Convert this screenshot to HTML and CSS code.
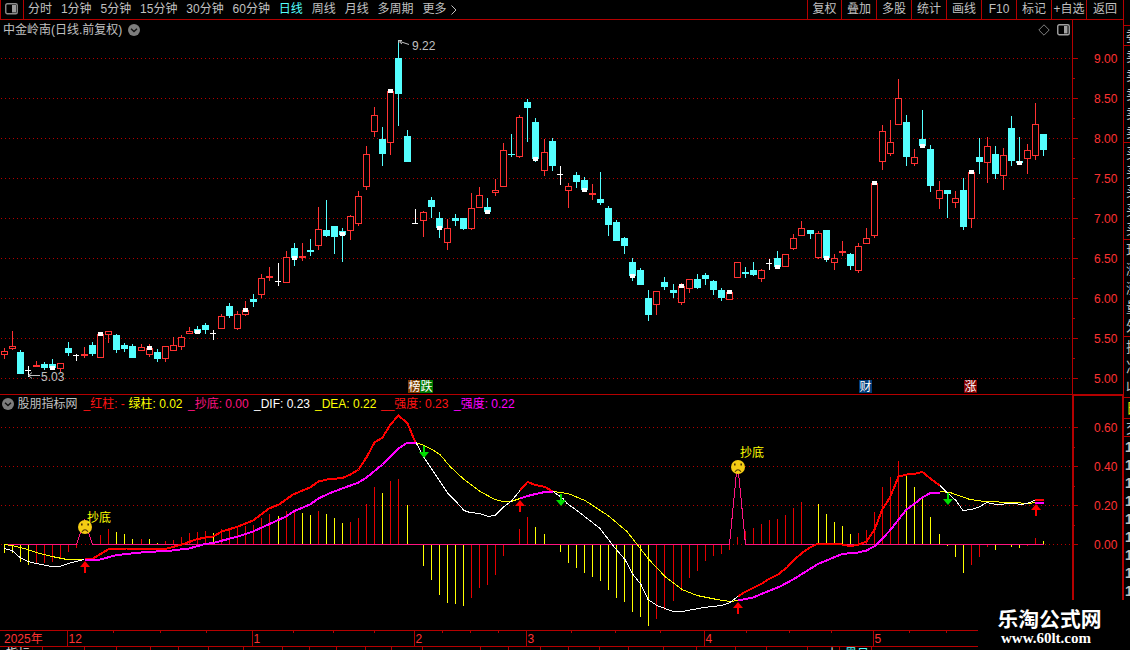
FILE: index.html
```html
<!DOCTYPE html>
<html lang="zh-CN">
<head>
    <meta charset="UTF-8">
    <meta name="viewport" content="width=device-width, initial-scale=1.0">
    <title>中金岭南 日线</title>
    <link rel="stylesheet" href="styles.css">
</head>
<body>
    <div class="terminal">
        <div class="workspace">
            <header class="toolbar">
                <div class="layout-toggle">
                    <svg width="13" height="12" viewBox="0 0 13 12">
                        <rect x="0.75" y="0.75" width="11.5" height="10" rx="1.5" fill="none" stroke="#8c8c8c" stroke-width="1.4"/>
                        <rect x="7" y="2" width="4" height="7.5" fill="#9a9a9a"/>
                    </svg>
                </div>
                <nav class="periods">
                    <span>分时</span>
                    <span>1分钟</span>
                    <span>5分钟</span>
                    <span>15分钟</span>
                    <span>30分钟</span>
                    <span>60分钟</span>
                    <span class="active">日线</span>
                    <span>周线</span>
                    <span>月线</span>
                    <span>多周期</span>
                    <span class="more">更多
                        <svg width="6" height="10" viewBox="0 0 6 10"><path d="M0.5 0.5L5 5L0.5 9.5" fill="none" stroke="#c0c0c0"/></svg>
                    </span>
                </nav>
                <div class="actions">
                    <span>复权</span>
                    <span>叠加</span>
                    <span>多股</span>
                    <span>统计</span>
                    <span>画线</span>
                    <span>F10</span>
                    <span>标记</span>
                    <span>+自选</span>
                    <span>返回</span>
                </div>
            </header>

            <section class="panel price-panel">
                <svg id="priceChart" width="1124" height="374" viewBox="0 20 1124 374"></svg>
                <div class="panel-head">
                    <span>中金岭南(日线.前复权)</span>
                    <svg class="chevron" width="12" height="12" viewBox="0 0 12 12">
                        <circle cx="6" cy="6" r="6" fill="#7d7d7d"/>
                        <path d="M3 4.8L6 7.6L9 4.8" fill="none" stroke="#111" stroke-width="1.4"/>
                    </svg>
                    <div class="panel-tools">
                        <svg width="12" height="12" viewBox="0 0 12 12"><path d="M6 0.8L11.2 6L6 11.2L0.8 6Z" fill="none" stroke="#808080"/></svg>
                        <svg width="13" height="12" viewBox="0 0 13 12">
                            <rect x="0.75" y="0.75" width="11.5" height="10" rx="1.5" fill="none" stroke="#a0a0a0" stroke-width="1.4"/>
                            <rect x="7" y="2" width="3.5" height="7.5" fill="#a0a0a0"/>
                        </svg>
                    </div>
                </div>
            </section>

            <section class="panel macd-panel">
                <svg id="macdChart" width="1124" height="236" viewBox="0 394 1124 236"></svg>
                <div class="legend">
                    <svg class="chevron" width="12" height="12" viewBox="0 0 12 12">
                        <circle cx="6" cy="6" r="6" fill="#7d7d7d"/>
                        <path d="M3 4.8L6 7.6L9 4.8" fill="none" stroke="#111" stroke-width="1.4"/>
                    </svg>
                    <span>股朋指标网</span>
                    <span class="red">_红柱: -</span>
                    <span class="yellow">绿柱: 0.02</span>
                    <span class="pink">_抄底: 0.00</span>
                    <span class="white">_DIF: 0.23</span>
                    <span class="yellow">_DEA: 0.22</span>
                    <span class="red">__强度: 0.23</span>
                    <span class="magenta">_强度: 0.22</span>
                </div>
            </section>

            <footer class="time-axis">
                <svg id="timeAxis" width="978" height="20" viewBox="0 630 978 20"></svg>
            </footer>
        </div>

        <aside class="quotes">
            <div class="group head"><span>委</span></div>
            <div class="group five"><span>卖</span><span>卖</span><span>卖</span><span>卖</span><span>卖</span></div>
            <div class="group five"><span>买</span><span>买</span><span>买</span><span>买</span><span>买</span></div>
            <div class="group five"><span>现</span><span>涨</span><span>涨</span><span>量</span><span>外</span></div>
            <div class="group three"><span>换</span><span>净</span><span>收</span></div>
            <div class="group tab"><span>日</span></div>
            <div class="group trade"><span>交</span></div>
            <div class="ticks">
                <span>1</span><span>1</span><span>1</span><span>1</span><span>1</span><span>1</span><span>1</span><span>1</span><span>1</span>
            </div>
        </aside>

        <div class="watermark">
            <div class="site-name">乐淘公式网</div>
            <div class="site-url">www.60lt.com</div>
        </div>
    </div>

    <script src="script.js"></script>
</body>
</html>
```

FILE: styles.css
```css
body, html {
    margin: 0;
    padding: 0;
    height: 100%;
    overflow: hidden;
    background-color: #000;
    color: #c0c0c0;
    font-family: 'Liberation Sans', 'Noto Sans CJK SC', sans-serif;
    font-size: 12px;
    line-height: 14px;
}

svg {
    display: block;
}

.terminal {
    position: relative;
    display: flex;
    width: 1130px;
    height: 650px;
    overflow: hidden;
}

.workspace {
    width: 1124px;
    flex: none;
    display: flex;
    flex-direction: column;
}

/* Top toolbar */
.toolbar {
    display: flex;
    height: 20px;
    box-sizing: border-box;
    border-bottom: 1px solid #b40000;
    border-right: 1px solid #b40000;
    line-height: 19px;
    white-space: nowrap;
}

.layout-toggle {
    width: 24px;
    box-sizing: border-box;
    padding: 3px 0 0 4px;
    border-left: 1px solid #b40000;
    border-right: 1px solid #b40000;
}

.periods {
    display: flex;
    flex: 1;
    gap: 8.9px;
    padding-left: 4px;
}

.periods .active {
    color: #54ffff;
}

.more {
    display: flex;
    align-items: center;
    gap: 5px;
}

.actions {
    display: flex;
}

.actions span {
    width: 35px;
    box-sizing: border-box;
    border-left: 1px solid #b40000;
    text-align: center;
}

.actions span:first-child {
    width: 34px;
}

.actions span:last-child {
    width: 37px;
}

/* Chart panels */
.panel {
    display: grid;
}

.panel > * {
    grid-area: 1 / 1;
}

.price-panel {
    height: 374px;
}

.macd-panel {
    height: 236px;
}

.panel-head {
    display: flex;
    align-items: center;
    align-self: start;
    gap: 5.5px;
    height: 19px;
    padding: 0 54px 0 3px;
}

.panel-tools {
    display: flex;
    gap: 7px;
    margin-left: auto;
}

.legend {
    display: grid;
    grid-template-columns: 15.5px 66px 45px 59.5px 66px 61px 66px 73px auto;
    align-items: center;
    align-self: start;
    height: 19px;
    padding-left: 2px;
    white-space: nowrap;
}

.red {
    color: #ff1414;
}

.yellow {
    color: #ffff00;
}

.pink {
    color: #ff1480;
}

.white {
    color: #ffffff;
}

.magenta {
    color: #ff00ff;
}

/* SVG text */
.label {
    fill: #c0c0c0;
}

.scale {
    fill: #ff3232;
}

.signal {
    fill: #ffff00;
}

.badge {
    fill: #ffffff;
}

.clip-text {
    fill: #e0e0e0;
}

.clip-text.hot {
    fill: #54ffff;
}

/* Quote column, cut off by the window edge */
.quotes {
    width: 6px;
    flex: none;
    overflow: hidden;
    padding-top: 25px;
    box-sizing: border-box;
}

.group {
    display: flex;
    flex-direction: column;
    justify-content: space-around;
    box-sizing: border-box;
    padding-left: 2px;
    border-top: 1px solid #b40000;
    font-size: 14px;
    line-height: 16px;
}

.head {
    height: 20px;
}

.five {
    height: 97px;
}

.three {
    height: 61px;
}

.tab {
    height: 21px;
    color: #e0e000;
}

.trade {
    height: 19px;
    border-bottom: 1px solid #b40000;
}

.ticks {
    display: flex;
    flex-direction: column;
    padding: 1px 0 0 1px;
    font-size: 14px;
    font-weight: bold;
    line-height: 18px;
}

.watermark {
    position: absolute;
    left: 978px;
    top: 600px;
    width: 152px;
    height: 50px;
    background-color: #000;
    color: #fff;
    font-weight: bold;
    white-space: nowrap;
}

.site-name {
    padding: 7px 0 0 19.5px;
    font-family: 'Noto Sans CJK SC', sans-serif;
    font-size: 20.8px;
    line-height: 22px;
}

.site-url {
    padding: 1px 0 0 23px;
    font-family: 'Liberation Serif', serif;
    font-size: 15px;
    line-height: 17px;
}
```

FILE: script.js
```js
const LINE = '#b40000';
const RED = '#ff3232';
const CYAN = '#54ffff';

// x of the wick for the bar with this index
const barX = i => 4 + Math.floor(i * 8.0606);

// type, high, body top, body bottom, low, marker top
const candles = [
    ['r',348,351,355,359], ['r',331,346,349,350], ['c',350,352,374,374], ['w',366,370,371,377], ['r',361,365,367,367],
    ['c',362,364,368,370], ['c',359,364,368,369,366], ['r',363,363,369,372], ['c',342,348,353,356], ['w',354,355,356,361],
    ['r',347,354,356,358], ['c',342,345,354,356], ['r',334,334,358,358,332], ['r',331,331,335,343], ['c',334,335,350,353],
    ['c',343,345,349,352], ['c',344,346,358,358], ['r',344,347,351,351], ['r',344,348,355,357,346], ['c',349,352,359,362],
    ['r',346,346,359,362], ['r',337,345,351,351], ['r',335,337,347,350], ['r',327,331,334,334], ['c',326,329,333,334,330],
    ['c',323,325,330,334], ['w',330,333,334,340], ['r',314,316,329,329], ['c',303,306,316,318], ['r',311,314,329,330],
    ['r',301,310,315,316,308], ['c',294,299,302,307], ['r',274,278,295,298], ['r',267,276,278,281], ['w',263,281,282,286],
    ['r',251,257,283,283], ['c',243,248,258,266,256], ['r',243,256,258,261], ['c',239,250,252,256], ['r',207,229,246,250],
    ['c',200,230,236,237], ['c',226,226,237,254], ['c',228,231,235,262,232], ['r',215,216,231,240], ['r',191,196,224,226],
    ['r',146,154,187,190], ['r',107,115,132,137], ['c',127,139,154,166], ['r',91,91,143,155,89], ['c',40,58,94,126],
    ['c',130,136,162,162], ['w',209,223,224,223], ['r',211,212,221,237], ['c',197,200,207,218], ['c',212,218,228,238,226],
    ['r',219,228,243,250], ['c',214,218,221,226], ['c',218,218,229,230], ['r',193,208,229,230], ['r',187,195,208,208],
    ['c',198,207,212,214,210], ['r',179,190,193,196], ['r',143,150,187,187], ['c',134,154,155,157], ['r',115,117,157,158],
    ['c',99,102,108,142], ['c',118,122,159,162,157], ['r',139,152,171,176], ['c',138,141,166,171], ['w',166,174,175,185],
    ['r',183,186,191,208], ['c',172,175,182,188], ['c',177,180,190,191,188], ['r',184,193,195,200], ['c',172,199,203,205],
    ['c',206,208,225,236], ['c',220,222,241,241], ['c',237,238,246,254], ['c',258,262,276,281,274], ['c',268,270,285,285],
    ['c',290,298,315,321], ['r',291,291,305,315], ['c',277,282,287,290], ['c',284,290,293,298], ['r',283,286,303,305,284],
    ['r',279,279,289,293], ['c',274,279,288,289], ['c',273,275,279,285], ['c',280,281,290,295], ['c',288,290,298,301],
    ['r',292,292,300,300,290], ['r',262,262,278,278], ['c',267,272,274,278], ['c',262,270,275,276], ['r',269,270,279,282],
    ['w',259,263,264,270], ['c',251,258,267,269,265], ['r',254,254,267,267], ['r',234,238,249,250], ['r',221,228,236,236],
    ['c',230,230,234,239], ['r',231,233,258,259], ['c',230,230,258,262,256], ['r',254,258,263,270], ['r',241,251,253,256],
    ['c',253,254,266,270], ['r',243,246,271,273], ['r',228,238,244,244], ['r',183,183,236,238,181], ['r',125,131,162,170],
    ['r',120,142,154,156], ['r',79,98,125,125], ['c',115,122,157,166], ['r',149,157,164,166], ['c',110,139,146,148,144],
    ['c',145,149,186,192], ['r',181,190,199,209], ['c',190,190,194,218], ['r',191,198,203,208], ['c',178,190,227,230],
    ['r',172,172,219,228,170], ['c',138,157,162,174], ['r',137,146,163,183], ['c',146,154,174,179], ['r',148,155,176,190],
    ['c',116,128,161,166], ['c',137,161,163,165,161], ['r',144,150,159,174], ['r',103,124,156,160], ['c',134,134,150,156]
];

// end of each histogram bar, y = yellow, r = red, 0 = nothing
const bars = ('y553 y553 y562 y565 r564 r563 r562 r558 r552 r548 0 0 r535 r529 y532 y534 y539 r539 y539 y543 ' +
    'r541 r540 r537 r533 r532 r531 y533 r529 r529 r527 r526 r525 r518 r514 y516 r511 r511 y513 y515 r511 ' +
    'y514 y518 y523 r522 r518 r504 r487 y493 r481 r479 y505 0 y566 y580 y595 y603 y604 y606 r598 r588 ' +
    'r585 r575 r556 0 r529 r517 y527 y534 0 y552 y563 y568 y573 y577 y581 y590 y598 y602 y612 y617 ' +
    'y626 r619 r610 r601 r591 r578 r571 r561 r556 r554 r550 r537 r531 r528 r524 r520 r519 r515 r508 r502 ' +
    '0 y504 y514 y522 y526 y534 r533 r530 r512 r487 r477 r461 y476 y487 y498 y517 y534 y546 y557 y573 ' +
    'r565 r557 r547 y550 0 y547 y548 r546 r538 y541').split(' ');

const yellow = [
    '4,544 12,545 28,549 36,552 52,556 67,559 84,559',
    '416,442 424,445 432,449 440,454 450,466 463,478 480,491 495,499 503,501 511,501 520,498',
    '553,491 568,493 585,500 608,515 627,531 638,545 648,558 665,576 682,589 697,595 717,599 730,601 738,600',
    '940,491 950,492 970,499 985,501 1013,502 1028,503 1036,502'
];
const white = [
    '4,548 12,550 20,557 28,561 36,563 52,566 60,566 68,563 84,559',
    '416,442 424,457 432,469 448,493 456,501 464,510 470,512 480,513 488,516 495,515 504,506 511,501 520,490',
    '553,491 563,498 567,503 577,510 600,528 613,545 625,559 633,574 641,584 648,599 657,605 673,611 682,611 704,607 722,605 730,602 738,596',
    '940,485 948,493 956,500 963,510 972,509 980,506 987,502 996,504 1013,503 1022,504 1030,502 1036,499'
];
const red = [
    '85,559 93,558 109,548.5 127,548 134,549 149,548 155,548.5 167,548 182,544 196,539 205,537 213,536 222,531 238,526 253,520 269,508 279,504 293,494 310,487 318.5,481 327,479 342.5,477.5 350.5,474 358.5,469 367,456 374.5,442 382.5,437 390.5,424 398.5,415 407.5,423 415.5,442',
    '520,490 527.5,481.5 535.5,484.5 545,486.5 553,491',
    '738,596 744,592 762,583 769,578.5 778,574 787,567 795,558.5 802,552.5 810,547 818,543 842,544 850,545.5 858,544.5 866.5,541 874.5,529 882.5,508.5 890,497 898.5,476 907,474 914,473.5 922.5,471.5 931.5,479 940,485',
    '1035,499 1044,499'
];
const magenta = [
    '85,559 100,559 117,554.5 141,552 172,550 189,548 205,543.5 213,542.5 238,536 253,531 268.5,524 286,516 294.5,510.5 310,504 318.5,498 330,492.5 358.5,482 366.5,477 382.5,464 398.5,448 407.5,442 415.5,442',
    '520,498 527.5,495.5 535.5,493.5 545,491.5 553,491',
    '738,600 753,597 770,590 780,586 793,579 802,573.5 818,563.5 842,553.5 858,552 866.5,550 875,545.5 890,530 906,509.5 922.5,497 931,492 940,492',
    '1035,502 1044,502'
];

function rect(x, y, w, h, color) {
    return `<rect x="${x}" y="${y}" width="${w}" height="${h}" fill="${color}" shape-rendering="crispEdges"/>`;
}

function text(x, y, value, cls) {
    return `<text x="${x}" y="${y}" class="${cls}">${value}</text>`;
}

function grid(y) {
    return `<path d="M1 ${y + 0.5}H1072" stroke="${LINE}" stroke-dasharray="1 3" shape-rendering="crispEdges"/>`;
}

function curve(points, color, width) {
    return `<polyline points="${points}" transform="translate(0 .5)" fill="none" stroke="${color}" stroke-width="${width}" stroke-linejoin="round" shape-rendering="crispEdges"/>`;
}

function candle(c, i) {
    const [type, high, top, bottom, low, mark] = c;
    const x = barX(i);
    const color = { r: RED, c: CYAN, w: '#fff' }[type];
    let out = rect(x, high, 1, low - high, color);
    if (type === 'w') {
        out += rect(x - 3, top, 6, 1, color);
    } else {
        out += rect(x - 3, top, 7, bottom - top, color);
        if (type === 'r' && bottom - top > 2) {
            out += rect(x - 2, top + 1, 5, bottom - top - 2, '#000');
        }
    }
    if (mark) {
        out += rect(x - 2, mark, 5, 4, '#fff');
    }
    return out;
}

function drawPrice() {
    let out = '';
    for (let i = 0; i < 9; i++) {
        const y = 58 + i * 40;
        out += grid(y);
        out += rect(1073, y, 5, 1, LINE);
        if (i < 8) {
            out += rect(1073, y + 20, 2, 1, LINE);
        }
        out += text(1094, y + 5, (9 - i * 0.5).toFixed(2), 'scale');
    }
    out += rect(1072, 20, 1, 374, LINE) + rect(1123, 20, 1, 374, LINE);
    out += candles.map(candle).join('');

    // highest and lowest price
    out += '<path d="M398.5 43V40.5H402M399 41.5L402 44M400 41.5L409 44.5" fill="none" stroke="#c0c0c0"/>';
    out += text(412, 50, '9.22', 'label');
    out += '<path d="M28 375.5H40M32 372.5L28.5 375.5L32 378.5" fill="none" stroke="#c0c0c0"/>';
    out += text(41, 381, '5.03', 'label');

    // event badges
    [[408, '榜', '#7d3c00'], [420, '跌', '#007800'], [859, '财', '#003c78'], [964, '涨', '#820000']].forEach(b => {
        out += rect(b[0], 380, 13, 13, b[2]) + text(b[0] + 0.5, 391, b[1], 'badge');
    });
    document.getElementById('priceChart').innerHTML = out;
}

function arrow(x, y, up) {
    const d = up ? 'l5 6h-4v6h-2v-6h-4z' : 'l5 -6h-4v-6h-2v6h-4z';
    return `<path d="M${x} ${up ? y : y + 12}${d}" fill="${up ? '#ff0000' : '#00dc00'}"/>`;
}

function sadFace(x, y) {
    return `<g transform="translate(${x} ${y})"><circle r="7" fill="#f5cd14"/>` +
        '<path d="M-3.2 -3.4v1.8M3.2 -3.4v1.8" stroke="#4a3200" stroke-width="1.6"/>' +
        '<path d="M-3 4.8Q0 0.6 3 4.8" fill="none" stroke="#4a3200" stroke-width="1.1"/></g>';
}

function drawMacd() {
    let out = '';
    [427, 466, 505, 544].forEach((y, i) => {
        out += grid(y) + rect(1074, y, 4, 1, LINE);
        if (i < 3) {
            out += rect(1074, y + 20, 1, 1, LINE);
        }
        out += text(1094, y + 5, (0.6 - i * 0.2).toFixed(2).replace('-', ''), 'scale');
    });
    bars.forEach((bar, i) => {
        if (bar === '0') {
            return;
        }
        const end = Number(bar.slice(1));
        out += rect(barX(i), Math.min(end, 544), 1, Math.abs(end - 544), bar[0] === 'y' ? '#ffff00' : '#e60000');
    });
    out += '<path d="M4 544.5H76.5L84.5 521L92.5 544.5H729.5L737.5 462L745.5 544.5H1044" fill="none" stroke="#ff1480" shape-rendering="crispEdges"/>';
    yellow.forEach(p => out += curve(p, '#ffff00', 1));
    white.forEach(p => out += curve(p, '#ffffff', 1));
    red.forEach(p => out += curve(p, '#ff0000', 2));
    magenta.forEach(p => out += curve(p, '#ff00ff', 2));

    [[85, 561], [520, 500], [738, 602], [1036, 504]].forEach(a => out += arrow(a[0], a[1], true));
    [[424, 446], [561, 494], [948, 493]].forEach(a => out += arrow(a[0], a[1], false));
    out += sadFace(85, 527) + text(87, 522, '抄底', 'signal');
    out += sadFace(738, 467) + text(740, 457, '抄底', 'signal');

    out += rect(0, 394, 1124, 1, LINE) + rect(1072, 394, 52, 2, LINE);
    out += rect(1072, 394, 2, 206, LINE) + rect(1122, 394, 2, 206, LINE);
    document.getElementById('macdChart').innerHTML = out;
}

function drawTimeAxis() {
    let out = rect(0, 630, 978, 1, LINE) + rect(0, 646, 978, 1, LINE);
    out += text(4, 643, '2025年', 'scale');
    [[67, '12'], [252, '1'], [414, '2'], [526, '3'], [704, '4'], [873, '5']].forEach(m => {
        out += rect(m[0], 630, 1, 16, LINE) + text(m[0] + 1.5, 643, m[1], 'scale');
    });
    [113, 160, 206, 293, 333, 374, 442, 470, 498, 571, 615, 660, 746, 789, 831, 909, 946].forEach(x => {
        out += rect(x, 631, 1, 2, LINE);
    });
    [42, 84, 116, 150, 178, 208, 243, 282, 309, 336, 365, 391, 422, 480, 508, 540, 568, 599, 628, 663, 696, 735, 766, 807, 839, 871].forEach(x => {
        out += rect(x, 647, 1, 3, LINE);
    });
    // next row of tabs, only its top edge is in view
    out += text(6, 658, '指标', 'clip-text') + text(826, 658, '小', 'clip-text') + text(845, 658, '黑日', 'clip-text hot');
    document.getElementById('timeAxis').innerHTML = out;
}

drawPrice();
drawMacd();
drawTimeAxis();
```
